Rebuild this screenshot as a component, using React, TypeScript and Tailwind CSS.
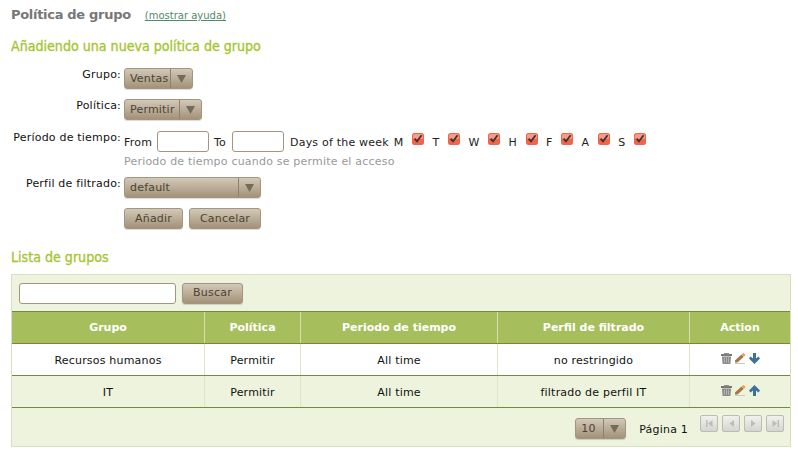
const btn =
  'rounded-[3px] border border-[#a3957f] bg-gradient-to-b from-[#d3c9b8] to-[#a39279] text-[#4b4335] shadow-[0_1px_1px_rgba(0,0,0,0.15)]'

const inputCls = 'rounded-[3px] border border-[#a3957f] bg-white'

const days = ['M', 'T', 'W', 'H', 'F', 'A', 'S']

const rows = [
  { group: 'Recursos humanos', policy: 'Permitir', time: 'All time', profile: 'no restringido', up: false, cls: 'bg-white' },
  { group: 'IT', policy: 'Permitir', time: 'All time', profile: 'filtrado de perfil IT', up: true, cls: 'bg-[#edf3dc]' },
]

const columns = [
  { title: 'Grupo', cls: 'w-[193px]' },
  { title: 'Política', cls: 'w-[96px]' },
  { title: 'Periodo de tiempo', cls: 'w-[197px]' },
  { title: 'Perfil de filtrado', cls: 'w-[192px]' },
  { title: 'Action', cls: 'flex-1' },
]

function Select({ label, width }: { label: string; width: string }) {
  return (
    <div className={`${btn} ${width} flex h-[21px] items-center`}>
      <span className="flex-1 truncate pt-[2px] pl-[5px] text-[11px] tracking-[0.2px]">{label}</span>
      <span className="flex h-full w-[22px] items-center justify-center border-l border-[#8f806a]">
        <svg width="9" height="8" viewBox="0 0 9 8">
          <path d="M0 0h9L4.5 8z" fill="#736b5b" />
        </svg>
      </span>
    </div>
  )
}

function Row({ label, children, className }: { label: string; children: React.ReactNode; className?: string }) {
  return (
    <div className={`flex ${className ?? ''}`}>
      <div className="w-[110px] shrink-0 text-right text-[11px] leading-[14px] tracking-[0.2px] text-[#111]">{label}</div>
      <div className="ml-[3px]">{children}</div>
    </div>
  )
}

function Check() {
  return (
    <svg width="12" height="12" viewBox="0 0 12 12">
      <rect x="0" y="0" width="12" height="12" rx="2.5" fill="#f0634c" />
      <rect x="1" y="1" width="10" height="5" rx="1.5" fill="#f79a86" />
      <path d="M2.6 5.6 5 8.4 9.6 2.2" fill="none" stroke="#3b3432" strokeWidth="1.8" />
    </svg>
  )
}

function Trash() {
  return (
    <svg width="11" height="11" viewBox="0 0 11 11">
      <rect x="0" y="1" width="11" height="2" fill="#777" />
      <rect x="3" y="0" width="5" height="1.5" fill="#8d8d8d" />
      <path d="M1 3.5h9l-.6 7.5H1.6z" fill="#8a8a8a" />
      <path d="M3.5 4.5v5.5M5.5 4.5v5.5M7.5 4.5v5.5" stroke="#bdbdbd" strokeWidth="0.8" />
    </svg>
  )
}

function Pencil() {
  return (
    <svg width="11" height="11" viewBox="0 0 11 11">
      <path d="M0 7.5 6.5 1.5 8.8 3.8 2.5 9.5H0z" fill="#a8744a" />
      <path d="M6.8 1.2 8.5 0 10.5 2 9.1 3.6z" fill="#f59a23" />
      <rect x="0" y="10" width="10" height="1" fill="#c8c8c0" />
    </svg>
  )
}

function Arrow({ up }: { up: boolean }) {
  return (
    <svg width="11" height="11" viewBox="0 0 11 11">
      <path
        d={up ? 'M5.5 0 11 5.5 9.5 7.5 7 5.5V11H4V5.5L1.5 7.5 0 5.5z' : 'M5.5 11 11 5.5 9.5 3.5 7 5.5V0H4v5.5L1.5 3.5 0 5.5z'}
        fill="#3d7199"
      />
    </svg>
  )
}

function PageButton({ d }: { d: string }) {
  return (
    <span className="flex h-[17px] w-[18px] items-center justify-center rounded-[2px] border border-[#bcbcb6] bg-gradient-to-b from-[#f1f1ee] to-[#d5d5d0]">
      <svg width="9" height="9" viewBox="0 0 9 9">
        <path d={d} fill="#bdbdb8" />
      </svg>
    </span>
  )
}

export default function App() {
  return (
    <div className="h-[467px] w-[798px] overflow-hidden bg-white px-[11px] font-['DejaVu_Sans',sans-serif]">
      <div className="flex h-[24px] items-end">
        <h1 className="text-[13px] leading-[18px] font-bold tracking-[-0.3px] text-[#777]">Política de grupo</h1>
        <a className="mb-[1px] ml-[14px] text-[10px] leading-[14px] text-[#4f8a6a] underline">(mostrar ayuda)</a>
      </div>

      <h2 className="mt-[13px] font-['DejaVu_Sans_Condensed','DejaVu_Sans',sans-serif] text-[14.1px] leading-[18px] font-normal text-[#a4c52e] [-webkit-text-stroke:0.3px_#a4c52e]">
        Añadiendo una nueva política de grupo
      </h2>

      <Row label="Grupo:" className="mt-[13px]">
        <Select label="Ventas" width="w-[69px]" />
      </Row>

      <Row label="Política:" className="mt-[10px]">
        <Select label="Permitir" width="w-[78px]" />
      </Row>

      <Row label="Período de tiempo:" className="mt-[11px]">
        <div className="flex h-[21px] items-center text-[11px] tracking-[0.2px] text-[#222]">
          <span className="mt-[3px]">From</span>
          <span className={`${inputCls} mr-[5px] ml-[5px] h-[21px] w-[52px]`} />
          <span className="mt-[3px]">To</span>
          <span className={`${inputCls} mr-[6px] ml-[6px] h-[21px] w-[52px]`} />
          <span className="mt-[3px]">Days of the week</span>
          {days.map((d, i) => (
            <span key={d} className={`flex items-center ${i === 0 ? 'ml-[5px]' : 'ml-[8px]'}`}>
              <span className="mt-[3px]">{d}</span>
              <span className="mb-[5px] ml-[9px] flex">
                <Check />
              </span>
            </span>
          ))}
        </div>
        <p className="mt-[2px] text-[11px] leading-[15px] tracking-[0.2px] text-[#999]">Periodo de tiempo cuando se permite el acceso</p>
      </Row>

      <Row label="Perfil de filtrado:" className="mt-[8px]">
        <Select label="default" width="w-[137px]" />
      </Row>

      <div className="mt-[10px] ml-[113px] flex gap-[6px]">
        <button className={`${btn} h-[21px] w-[59px] pt-[1px] text-[11px] tracking-[0.2px]`}>Añadir</button>
        <button className={`${btn} h-[21px] w-[72px] pt-[1px] text-[11px] tracking-[0.2px]`}>Cancelar</button>
      </div>

      <h2 className="mt-[19px] font-['DejaVu_Sans_Condensed','DejaVu_Sans',sans-serif] text-[14.1px] leading-[18px] font-normal text-[#a4c52e] [-webkit-text-stroke:0.3px_#a4c52e]">
        Lista de grupos
      </h2>

      <div className="mt-[8px] w-[780px] border border-[#d8e0bf] bg-[#edf3dc]">
        <div className="flex h-[36px] items-center gap-[6px] px-[7px]">
          <span className={`${inputCls} h-[21px] w-[157px]`} />
          <button className={`${btn} h-[21px] w-[61px] pt-[1px] text-[11px] tracking-[0.2px]`}>Buscar</button>
        </div>

        <div className="flex h-[33px] border-y border-[#728a3d] bg-[#a6bf5c]">
          {columns.map((c) => (
            <div
              key={c.title}
              className={`${c.cls} flex items-center justify-center border-r border-[#d5dfb3] pt-[2px] text-[11px] font-bold text-white last:border-r-0`}
            >
              {c.title}
            </div>
          ))}
        </div>

        {rows.map((r) => (
          <div key={r.group} className={`flex h-[32px] border-b border-[#728a3d] text-[11px] tracking-[0.2px] text-[#111] ${r.cls}`}>
            {[r.group, r.policy, r.time, r.profile].map((v, i) => (
              <div
                key={i}
                className={`${columns[i].cls} flex items-center justify-center border-r border-[#dfe5cb] pt-[3px]`}
              >
                {v}
              </div>
            ))}
            <div className="flex flex-1 items-center justify-center gap-[3px] pb-[2px]">
              <Trash />
              <Pencil />
              <Arrow up={r.up} />
            </div>
          </div>
        ))}

        <div className="flex h-[38px] items-start justify-end pt-[7px] pr-[6px]">
          <div className="mt-[3px]">
            <Select label="10" width="w-[51px]" />
          </div>
          <span className="mt-[4px] mr-[12px] ml-[13px] text-[11px] leading-[21px] tracking-[0.2px] text-[#111]">Página 1</span>
          <div className="flex gap-[4px]">
            <PageButton d="M1 1h1.5v7H1zM7.5 1v7L3 4.5z" />
            <PageButton d="M7 1v7L2.5 4.5z" />
            <PageButton d="M2 1v7l4.5-3.5z" />
            <PageButton d="M1.5 1v7L6 4.5zM6.5 1H8v7H6.5z" />
          </div>
        </div>
      </div>
    </div>
  )
}
